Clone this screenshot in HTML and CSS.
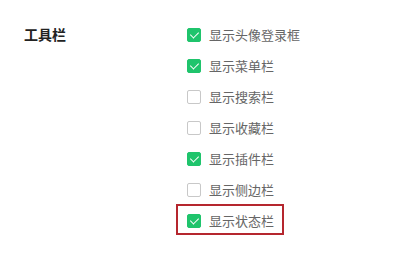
FILE: index.html
```html
<!DOCTYPE html>
<html lang="zh-CN">
<head>
  <meta charset="UTF-8">
  <title>工具栏</title>
  <link rel="stylesheet" href="styles.css">
</head>
<body>
  <div class="setting">
    <div class="setting_label">工具栏</div>
    <ul class="opt_list">
      <li class="opt on"><span class="chk"></span>显示头像登录框</li>
      <li class="opt on"><span class="chk"></span>显示菜单栏</li>
      <li class="opt"><span class="chk"></span>显示搜索栏</li>
      <li class="opt"><span class="chk"></span>显示收藏栏</li>
      <li class="opt on"><span class="chk"></span>显示插件栏</li>
      <li class="opt"><span class="chk"></span>显示侧边栏</li>
      <li class="opt on mark"><span class="chk"></span>显示状态栏</li>
    </ul>
  </div>
</body>
</html>
```
FILE: styles.css
```css
*{margin: 0; padding: 0; box-sizing: border-box;}
body{
  background: #fff;
  font-family: "Noto Sans CJK SC", "Microsoft YaHei", sans-serif;
}
.setting{
  display: flex;
  padding: 19px 0 0 24px;
}
.setting_label{
  width: 163px;
  line-height: 31px;
  font-size: 14px;
  font-weight: bold;
  color: #222;
}
.opt_list{list-style: none;}
.opt{
  position: relative;
  display: flex;
  align-items: center;
  height: 31px;
  font-size: 13px;
  color: #666;
  width: fit-content;
}
.chk{
  width: 14px; height: 14px;
  margin-right: 8px;
  border: 1px solid #c8c8c8;
  border-radius: 2px;
  background: #fff;
  position: relative;
}
.opt.on .chk{
  border-color: #1fc46c;
  background: #1fc46c;
}
.opt.on .chk::after{
  content: "";
  position: absolute;
  left: 4px; top: 1.5px;
  width: 4px; height: 7px;
  border: solid #fff;
  border-width: 0 1.4px 1.4px 0;
  transform: rotate(45deg);
}
.opt.mark::before{
  content: "";
  position: absolute;
  top: -1px; bottom: 1px;
  left: -11px; right: -10px;
  border: 2px solid #b5262e;
}
```
